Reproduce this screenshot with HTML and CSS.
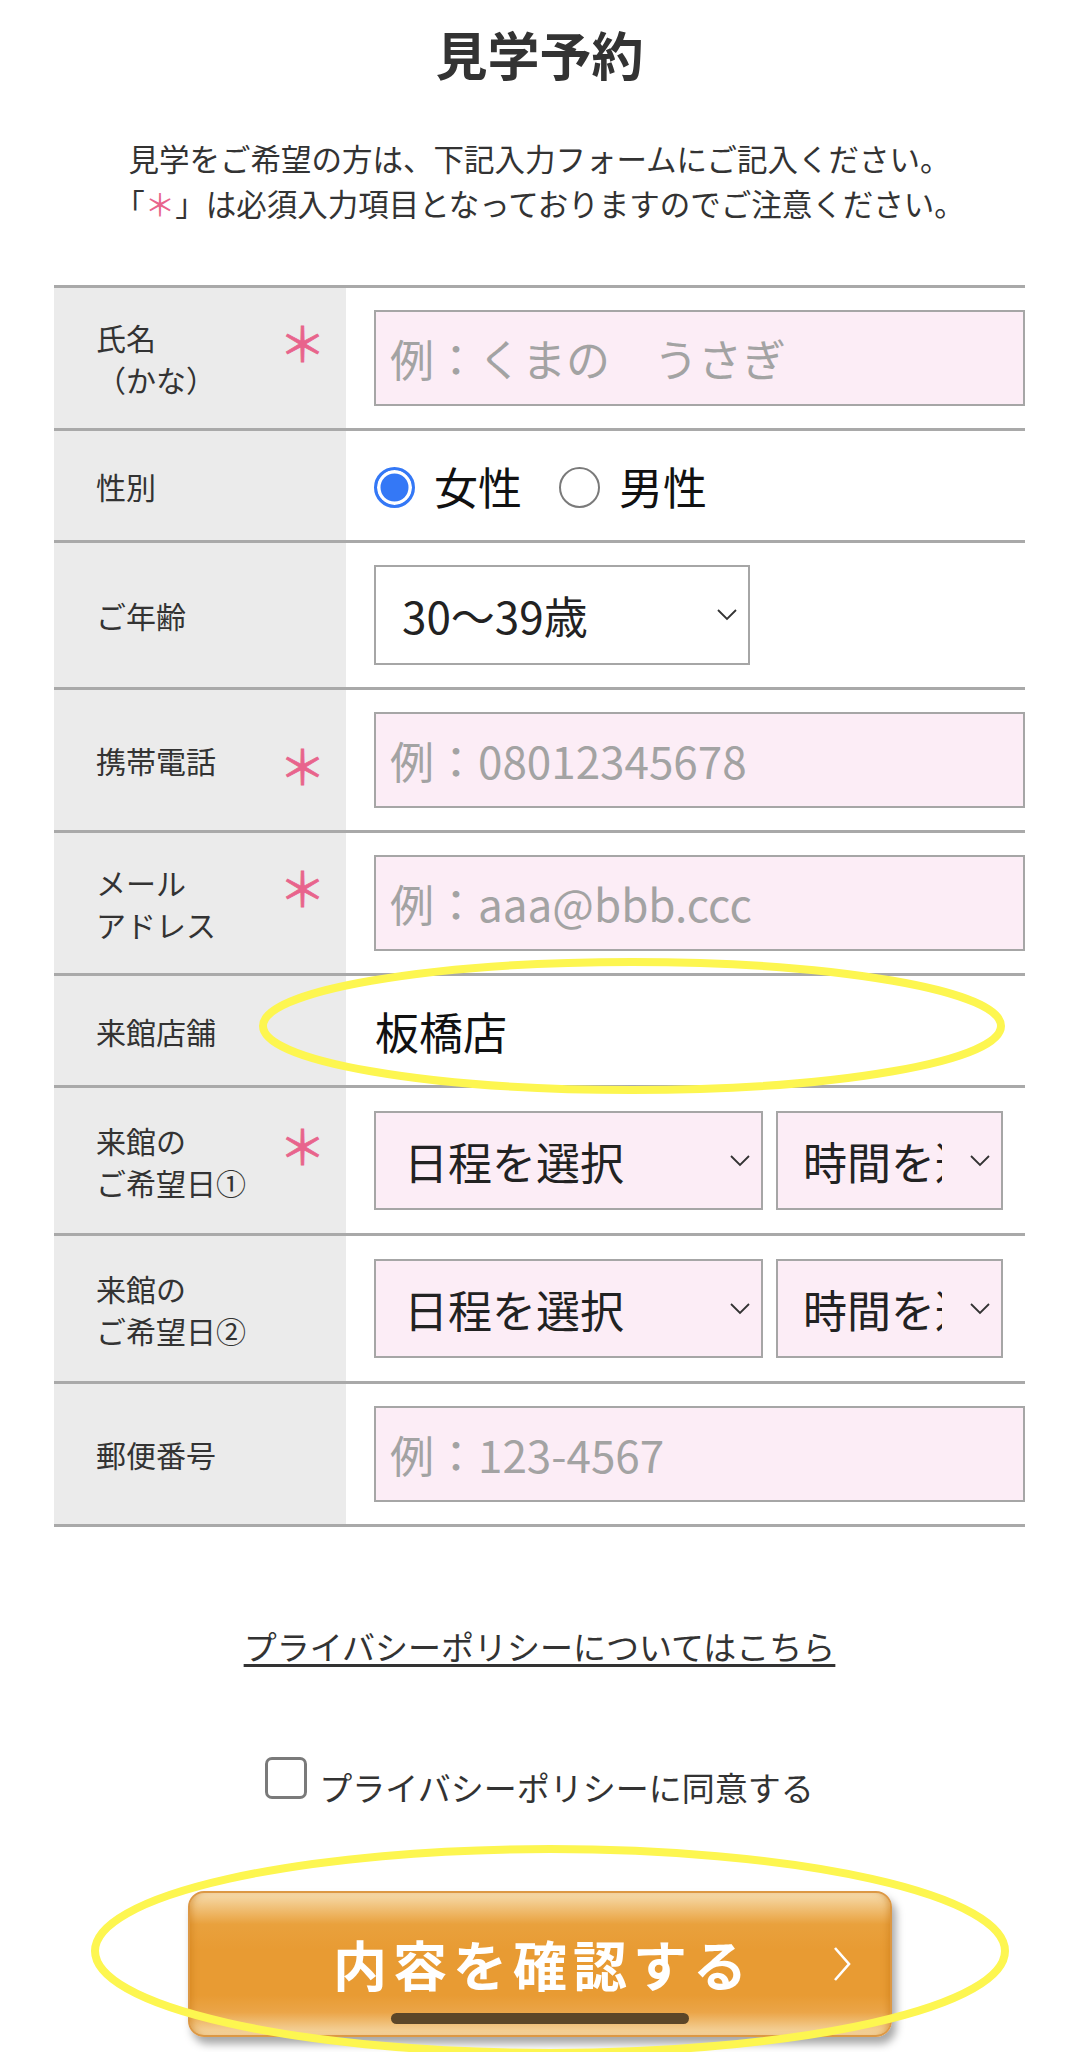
FILE: index.html
```html
<!DOCTYPE html>
<html lang="ja">
<head>
<meta charset="utf-8">
<title>見学予約</title>
<link rel="stylesheet" href="styles.css">
</head>
<body>
<div class="page">
  <h1 class="title">見学予約</h1>
  <p class="desc">見学をご希望の方は、下記入力フォームにご記入ください。<br>「<span class="pink">＊</span>」は必須入力項目となっておりますのでご注意ください。</p>

  <div class="form">
    <div class="row">
      <div class="label"><div class="linner"><span class="ltext">氏名<br>（かな）</span><span class="req">＊</span></div></div>
      <div class="val"><input class="field" type="text" placeholder="例：くまの　うさぎ"></div>
    </div>
    <div class="row row-short">
      <div class="label"><div class="linner"><span class="ltext">性別</span></div></div>
      <div class="val">
        <div class="radios">
          <span class="radio checked"></span><span class="rlabel">女性</span>
          <span class="radio"></span><span class="rlabel">男性</span>
        </div>
      </div>
    </div>
    <div class="row">
      <div class="label"><div class="linner"><span class="ltext">ご年齢</span></div></div>
      <div class="val">
        <div class="select sel-age">
          <span class="stext">30〜39歳</span>
          <svg class="chev" width="20" height="12" viewBox="0 0 20 12"><polyline points="1,1 10,10 19,1" fill="none" stroke="#333" stroke-width="1.8"/></svg>
        </div>
      </div>
    </div>
    <div class="row">
      <div class="label"><div class="linner"><span class="ltext">携帯電話</span><span class="req">＊</span></div></div>
      <div class="val"><input class="field" type="text" placeholder="例：08012345678"></div>
    </div>
    <div class="row">
      <div class="label"><div class="linner"><span class="ltext">メール<br>アドレス</span><span class="req">＊</span></div></div>
      <div class="val"><input class="field" type="text" placeholder="例：aaa@bbb.ccc"></div>
    </div>
    <div class="row row-short">
      <div class="label"><div class="linner"><span class="ltext">来館店舗</span></div></div>
      <div class="val"><span class="store">板橋店</span></div>
    </div>
    <div class="row row-date">
      <div class="label"><div class="linner"><span class="ltext">来館の<br>ご希望日①</span><span class="req">＊</span></div></div>
      <div class="val">
        <div class="select pinkbg sel-date">
          <span class="stext">日程を選択</span>
          <svg class="chev" width="20" height="12" viewBox="0 0 20 12"><polyline points="1,1 10,10 19,1" fill="none" stroke="#333" stroke-width="1.8"/></svg>
        </div>
        <div class="select pinkbg sel-time">
          <span class="stext">時間を選択</span>
          <svg class="chev" width="20" height="12" viewBox="0 0 20 12"><polyline points="1,1 10,10 19,1" fill="none" stroke="#333" stroke-width="1.8"/></svg>
        </div>
      </div>
    </div>
    <div class="row row-date">
      <div class="label"><div class="linner"><span class="ltext">来館の<br>ご希望日②</span></div></div>
      <div class="val">
        <div class="select pinkbg sel-date">
          <span class="stext">日程を選択</span>
          <svg class="chev" width="20" height="12" viewBox="0 0 20 12"><polyline points="1,1 10,10 19,1" fill="none" stroke="#333" stroke-width="1.8"/></svg>
        </div>
        <div class="select pinkbg sel-time">
          <span class="stext">時間を選択</span>
          <svg class="chev" width="20" height="12" viewBox="0 0 20 12"><polyline points="1,1 10,10 19,1" fill="none" stroke="#333" stroke-width="1.8"/></svg>
        </div>
      </div>
    </div>
    <div class="row">
      <div class="label"><div class="linner"><span class="ltext">郵便番号</span></div></div>
      <div class="val"><input class="field" type="text" placeholder="例：123-4567"></div>
    </div>
  </div>

  <p class="policy"><a href="#">プライバシーポリシーについてはこちら</a></p>

  <div class="agree">
    <span class="checkbox"></span>
    <span class="agree-text">プライバシーポリシーに同意する</span>
  </div>

  <div class="btn-wrap">
    <button class="btn" type="button">
      <span class="btn-spacer"></span>
      <span class="btn-text">内容を確認する</span>
      <svg class="btn-chev" width="20" height="36" viewBox="0 0 20 36"><polyline points="3,2 17,18 3,34" fill="none" stroke="#fff" stroke-width="2.6"/></svg>
    </button>
  </div>
</div>

<svg class="marks" width="1080" height="2052" viewBox="0 0 1080 2052">
  <ellipse cx="632" cy="1026" rx="369" ry="64" fill="none" stroke="#fdf650" stroke-width="8"/>
  <ellipse cx="550" cy="1951" rx="455" ry="102" fill="none" stroke="#fdf650" stroke-width="8"/>
</svg>
<div class="homebar"></div>
</body>
</html>
```

FILE: styles.css
```css
html, body {
  margin: 0;
  padding: 0;
  width: 1080px;
  height: 2052px;
  overflow: hidden;
  background: #fff;
}

body {
  position: relative;
  font-family: "Noto Sans CJK JP", "Noto Sans", sans-serif;
  color: #333;
}

.page {
  padding: 18px 55px 0 54px;
}

.title {
  margin: 0;
  font-size: 52px;
  line-height: 72px;
  font-weight: 700;
  text-align: center;
  color: #333;
}

.desc {
  margin: 46px 0 0;
  font-size: 30.5px;
  line-height: 45px;
  text-align: center;
  color: #333;
}

.pink {
  color: #e8648c;
}

.form {
  margin-top: 59px;
  border-top: 3px solid #a9a9a9;
}

.row {
  display: grid;
  grid-template-columns: 292px 1fr;
  border-bottom: 3px solid #a9a9a9;
}

.label {
  background: #ebebeb;
  display: flex;
  align-items: center;
  padding: 0 20px 0 42px;
  font-size: 30px;
  line-height: 42px;
  color: #333;
}

.linner {
  flex: 1;
  display: flex;
  align-items: flex-start;
}

.ltext {
  flex: 1;
}

.req {
  color: #e8648c;
  font-size: 47px;
  line-height: 42px;
  -webkit-text-stroke: 0.8px #e8648c;
  transform: translateY(5px);
}

.val {
  display: flex;
  align-items: center;
  padding: 22px 0 22px 28px;
  gap: 13px;
}

.field {
  box-sizing: border-box;
  width: 100%;
  height: 96px;
  margin: 0;
  border: 2px solid #a6a6a6;
  border-radius: 0;
  background: #fcedf6;
  padding: 0 14px;
  font-family: "Noto Sans CJK JP", "Noto Sans", sans-serif;
  font-size: 44px;
  color: #333;
  outline: none;
}

.field::placeholder {
  color: #a3a3a3;
}

.row-short .val {
  padding-top: 0;
  padding-bottom: 0;
  height: 109px;
  box-sizing: border-box;
}

.radios {
  display: flex;
  align-items: center;
  font-size: 44px;
  line-height: 64px;
  color: #111;
}

.radio {
  box-sizing: border-box;
  width: 41px;
  height: 41px;
  border-radius: 50%;
  border: 2.5px solid #7a7a7a;
  background: #fff;
  margin-top: 3px;
}

.radio.checked {
  border: 3px solid #3478f6;
  background: #3478f6;
  box-shadow: inset 0 0 0 3.5px #fff;
}

.rlabel {
  margin-left: 19px;
  margin-right: 37px;
}

.store {
  font-size: 44px;
  line-height: 64px;
  color: #111;
  margin-left: 1px;
}

.select {
  box-sizing: border-box;
  height: 100px;
  border: 2px solid #a6a6a6;
  background: #fff;
  display: flex;
  align-items: center;
  padding: 0 11px 0 26px;
  font-size: 44px;
  color: #222;
}

.pinkbg {
  background: #fcedf6;
}

.stext {
  flex: 1;
  white-space: nowrap;
  overflow: hidden;
}

.chev {
  flex: none;
  margin-left: 10px;
}

.sel-age {
  width: 376px;
}

.row-date .val {
  padding-top: 23px;
  padding-bottom: 23px;
}

.sel-date {
  width: 389px;
  height: 99px;
  padding-left: 28px;
}

.sel-time {
  width: 227px;
  height: 99px;
  padding-left: 25px;
  padding-right: 11px;
}

.sel-time .chev {
  margin-left: 28px;
}

.policy {
  margin: 95px 0 0;
  text-align: center;
  font-size: 33px;
  line-height: 48px;
}

.policy a {
  color: #333;
  text-decoration: underline;
  text-decoration-thickness: 3px;
  text-underline-offset: 4px;
}

.agree {
  margin-top: 93px;
  display: flex;
  justify-content: center;
  align-items: flex-start;
  font-size: 33px;
  line-height: 48px;
  color: #333;
}

.checkbox {
  box-sizing: border-box;
  width: 42px;
  height: 42px;
  border: 3px solid #7a7a7a;
  border-radius: 7px;
  background: #fff;
  margin-top: -6px;
  margin-right: 12px;
}

.btn-wrap {
  margin-top: 80px;
  display: flex;
  justify-content: center;
}

.btn {
  box-sizing: border-box;
  width: 704px;
  height: 146px;
  margin: 0 0 0 1px;
  padding: 0 36px;
  border: 2px solid #dc9845;
  border-radius: 16px;
  background: linear-gradient(to bottom,
    #f6dcae 0%,
    #f1c47f 9%,
    #e9a13d 22%,
    #e89b33 40%,
    #e89b33 72%,
    #eba548 84%,
    #f2c98a 95%,
    #f5d5a0 100%);
  box-shadow: 4px 7px 8px rgba(0, 0, 0, 0.35), inset 6px 0 6px -4px rgba(200, 120, 20, 0.5), inset -6px 0 6px -4px rgba(200, 120, 20, 0.5);
  display: grid;
  grid-template-columns: 1fr auto 1fr;
  align-items: center;
  font-family: "Noto Sans CJK JP", "Noto Sans", sans-serif;
}

.btn-text {
  color: #fff;
  font-size: 54px;
  font-weight: 700;
  letter-spacing: 6px;
  line-height: 70px;
  margin-left: 6px;
}

.btn-chev {
  justify-self: end;
  margin-right: 2px;
}

.marks {
  position: absolute;
  left: 0;
  top: 0;
  pointer-events: none;
}

.homebar {
  position: absolute;
  left: 391px;
  top: 2013px;
  width: 298px;
  height: 11px;
  border-radius: 6px;
  background: #5c4628;
}
```
